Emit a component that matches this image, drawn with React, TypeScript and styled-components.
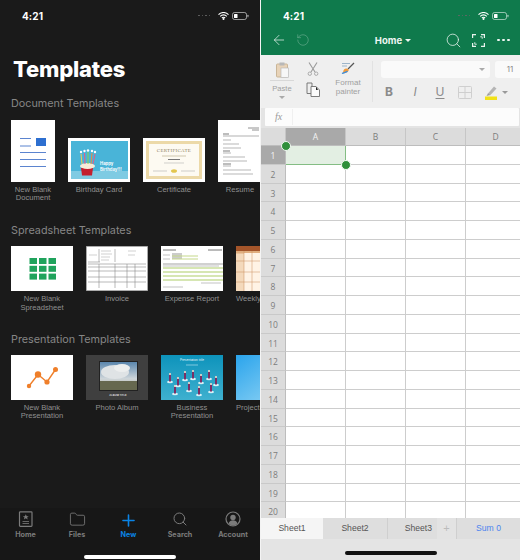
import React from "react";
import styled, { createGlobalStyle } from "styled-components";
import { ArrowLeft, RotateCcw, Search, Folder, Plus } from "lucide-react";

const Global = createGlobalStyle`
  html, body { margin: 0; padding: 0; background: #fff; }
  body { font-family: "Liberation Sans", Arial, sans-serif; }
  * { box-sizing: border-box; }
`;

const Page = styled.div`
  width: 520px; height: 560px; display: flex; gap: 1px; overflow: hidden; background: #f4f4f4;
`;
const Dark = styled.div`
  width: 260px; height: 560px; background: #1a1a1a; display: flex; flex-direction: column; overflow: hidden;
`;
const Status = styled.div`
  height: 31px; flex: none; padding: 0 11px 0 22px; display: flex; justify-content: space-between; align-items: center;
  color: #fff; font: 700 10px "Inter", sans-serif; letter-spacing: .1px;
`;
const Title = styled.h1`
  margin: 22px 0 0 13px; color: #fff; font: 800 22px/32px "Inter", sans-serif; letter-spacing: -.2px;
`;
const SectionTitle = styled.h2<{ $top: number }>`
  margin: ${p => p.$top}px 0 0 11px; color: #868686; font: 400 10.8px/14px "Inter", sans-serif;
`;
const Row = styled.div<{ $top: number }>`
  display: flex; gap: 13px; padding-left: 11px; margin-top: ${p => p.$top}px; width: 320px; align-items: flex-start;
`;
const Tile = styled.div<{ $w: number }>`
  width: ${p => p.$w}px; flex: none; display: flex; flex-direction: column; align-items: center;
`;
const Thumb = styled.div<{ $h: number }>`
  height: ${p => p.$h}px; width: 100%; display: flex; align-items: flex-end;
  svg { display: block; }
`;
const Caption = styled.div`
  margin-top: 4px; width: 78px; text-align: center; color: #909090; font: 400 7.6px/8.2px "Liberation Sans", sans-serif;
`;
const CutCaption = styled(Caption)`
  width: 100%; text-align: left;
`;
const TabBar = styled.nav`
  margin-top: auto; height: 52px; flex: none; background: #171717; display: grid;
  grid-template-columns: 51px 52px 51px 52px 54px; padding-top: 3px;
`;
const Tab = styled.div<{ $on?: boolean }>`
  display: flex; flex-direction: column; align-items: center; height: 28px; justify-content: space-between;
  color: ${p => (p.$on ? "#0a84e6" : "#7b7b7b")}; font: 700 7.2px/9px "Inter", sans-serif;
  svg { display: block; }
`;
const HomeBar = styled.div<{ $dark?: boolean }>`
  width: 92px; height: 3.5px; border-radius: 2px; margin: 0 auto; background: ${p => (p.$dark ? "#111" : "#fff")};
`;
const HomeWrap = styled.div`
  padding-top: 15px; grid-column: 1 / -1;
`;
const Light = styled.div`
  flex: 1; height: 560px; background: #e4e4e4; display: flex; flex-direction: column; overflow: hidden;
`;
const GreenTop = styled.div`
  background: #0f7a4c; height: 55px; flex: none; display: flex; flex-direction: column;
`;
const NavRow = styled.div`
  flex: 1; display: grid; grid-template-columns: 60px 114px 27px 25px 1fr; align-items: center; padding: 0 0 6px 10px; color: #e9f3ee;
`;
const NavLeft = styled.div`
  display: flex; gap: 9px; align-items: center;
`;
const NavTitle = styled.div`
  color: #eef6f2; font: 700 9.5px "Inter", sans-serif; display: flex; align-items: center; justify-content: center; gap: 3px; padding-left: 10px;
`;
const Caret = styled.span<{ $c?: string }>`
  display: inline-block; width: 0; height: 0; border: 3px solid transparent; border-bottom-width: 0; border-top: 3.5px solid ${p => p.$c ?? "currentColor"};
`;
const PasteCaret = styled(Caret)`
  margin-top: 3px;
`;
const Dots = styled.div`
  display: flex; gap: 2.6px;
  i { width: 2.6px; height: 2.6px; border-radius: 50%; background: #eef6f2; }
`;
const Ribbon = styled.div`
  height: 53px; flex: none; background: #efefef; display: flex; overflow: hidden;
`;
const ToolGroup = styled.div`
  width: 112px; flex: none; display: grid; grid-template-columns: 36px 26px 44px; padding: 1px 0 0 3px;
  border-right: 1px solid #e2e2e2; margin: 6px 0;
`;
const ToolCol = styled.div`
  display: flex; flex-direction: column; align-items: center; color: #a0a0a0; font: 400 7.6px/9px "Liberation Sans", sans-serif; text-align: center;
`;
const CutCol = styled(ToolCol)`
  gap: 6px;
`;
const PainterLabel = styled.span`
  margin-top: 4px; font-size: 8px;
`;
const PasteLine = styled.div`
  width: 24px; height: 1px; background: #d8d8d8; margin: 2px 0 3px;
`;
const Fonts = styled.div`
  flex: 1; padding: 6px 0 0 8px; display: flex; flex-direction: column; gap: 6px; overflow: hidden;
`;
const FontRow = styled.div`
  display: flex; gap: 5px; width: 150px;
`;
const FontBox = styled.div<{ $w: number }>`
  width: ${p => p.$w}px; height: 17px; flex: none; background: #fafafa; border-radius: 3px; color: #8a8a8a; font: 400 8px/17px "Inter", sans-serif;
  display: flex; align-items: center; justify-content: flex-end; padding-right: 5px;
`;
const SizeBox = styled(FontBox)`
  justify-content: center; padding: 0;
`;
const Formats = styled.div`
  display: flex; align-items: center; color: #8b8b8b; margin-left: -3px;
`;
const Fmt = styled.div<{ $w: number; $s?: string }>`
  width: ${p => p.$w}px; flex: none; text-align: center; font: ${p => p.$s ?? "400 12px"}/16px "Inter", sans-serif;
  display: flex; justify-content: center; align-items: center;
`;
const Under = styled.u`
  text-underline-offset: 2px;
`;
const Formula = styled.div`
  height: 18px; flex: none; margin: 0 1px 0 4px; background: #fcfcfc; display: flex; align-items: center; border-radius: 1px;
  color: #9a9a9a; font: italic 400 10px "Liberation Serif", serif;
`;
const Fx = styled.span`
  width: 28px; text-align: center; border-right: 1px solid #f0f0f0; line-height: 16px;
`;
const GridWrap = styled.div`
  margin-top: 2px; height: 390px; flex: none; background: #fff; position: relative; overflow: hidden;
  display: grid; grid-template-columns: 25px 60px 60px 60px 60px; grid-template-rows: 18px repeat(20, 18.75px); align-content: start;
`;
const ColHead = styled.div<{ $on?: boolean }>`
  background: ${p => (p.$on ? "#a9a9a9" : "#dcdcdc")}; color: ${p => (p.$on ? "#f4f4f4" : "#7c7c7c")}; font: 400 8.5px/18px "Open Sans", sans-serif; text-align: center;
  border-right: 1px solid #c6c6c6; border-bottom: 1px solid #bdbdbd;
`;
const RowHead = styled.div<{ $on?: boolean }>`
  background: ${p => (p.$on ? "#a9a9a9" : "#dcdcdc")}; color: ${p => (p.$on ? "#f4f4f4" : "#7c7c7c")}; font: 400 8.5px/18.75px "Open Sans", sans-serif; text-align: center;
  border-bottom: 1px solid #c9c9c9; border-right: 1px solid #bdbdbd; padding-top: 1px;
`;
const Cell = styled.div<{ $on?: boolean }>`
  background: ${p => (p.$on ? "#e3efe3" : "#fff")}; border-right: 1px solid ${p => (p.$on ? "#84bd84" : "#cdcdcd")}; border-bottom: 1px solid ${p => (p.$on ? "#84bd84" : "#cdcdcd")};
`;
const Handle = styled.span<{ $x: number; $y: number }>`
  position: absolute; left: ${p => p.$x}px; top: ${p => p.$y}px; width: 10px; height: 10px; border-radius: 50%; background: #2f8f3a; border: 1px solid #f2f7f2;
`;
const SheetBar = styled.div`
  height: 21px; flex: none; display: grid; grid-template-columns: 62px 65px 49px 20px 1fr; background: #dedede; font: 400 8.6px/21px "Liberation Sans", sans-serif; color: #555; text-align: center;
`;
const Sheet = styled.div<{ $on?: boolean; $edge?: boolean }>`
  background: ${p => (p.$on ? "#f5f5f5" : "transparent")}; border-right: ${p => (p.$edge ? "1px solid #cfcfcf" : "none")};
`;
const SheetName = styled(Sheet)`
  text-align: right; padding-right: 5px;
`;
const AddSheet = styled(Sheet)`
  background: #e3e3e3; color: #bbb; font-size: 11px;
`;
const Sum = styled(Sheet)`
  color: #4d84ee;
`;
const Bottom = styled.div`
  flex: 1; padding-top: 12px; background: #e4e4e4;
`;
const StatusIcons = styled.div`
  display: flex; align-items: center; gap: 3px;
  i { width: 1.7px; height: 1.7px; border-radius: 50%; background: #666; margin-right: -1.2px; }
`;
const StatusGap = styled.span`
  width: 3px;
`;

const Wifi = () => (
  <svg width="11" height="8" viewBox="0 0 11 8"><path d="M.5 2.6A7 7 0 0 1 10.5 2.6M2.2 4.3a4.6 4.6 0 0 1 6.6 0M3.9 6a2.2 2.2 0 0 1 3.2 0" stroke="currentColor" strokeWidth="1.1" fill="none"/><circle cx="5.5" cy="7" r="1" fill="currentColor"/></svg>
);
const Battery = () => (
  <svg width="17" height="8" viewBox="0 0 17 8"><rect x=".5" y=".5" width="14" height="7" rx="2" fill="none" stroke="currentColor" strokeOpacity=".55"/><rect x="2" y="2" width="3.5" height="4" rx=".6" fill="currentColor"/><rect x="15.4" y="2.7" width="1.1" height="2.6" rx=".5" fill="currentColor" opacity=".6"/></svg>
);
const StatusRight = () => (
  <StatusIcons><i /><i /><i /><i /><StatusGap /><Wifi /><Battery /></StatusIcons>
);

const BlankDoc = () => (
  <svg width="44" height="62" viewBox="0 0 44 62"><rect width="44" height="62" fill="#fff"/><g stroke="#5b84cf" strokeWidth="1"><path d="M9 18.500h11M9 26h11M9 32.500h26M9 39.500h26M9 46.500h26"/></g><rect x="25" y="18" width="10" height="8" fill="#2d6fd0"/></svg>
);
const Birthday = () => (
  <svg width="62" height="44" viewBox="0 0 62 44"><rect width="62" height="44" fill="#fff"/><rect x="3" y="3" width="57" height="38" fill="#49b4d8"/><rect x="3" y="33" width="57" height="8" fill="#7fcbe3"/><path d="M13 30h12l-1 7.500h-10z" fill="#c3202f"/><ellipse cx="19.500" cy="28" rx="7.500" ry="3" fill="#f6ecd8"/><g strokeWidth="1"><path d="M14 26l-1-10" stroke="#f2d04c"/><path d="M17 26l-.5-11" stroke="#e85b8a"/><path d="M20 26v-12" stroke="#8bd04c"/><path d="M23 26l1-11" stroke="#f08a3c"/><path d="M25 26l2-10" stroke="#e85b8a"/></g><circle cx="13" cy="14" r="1.200" fill="#fff"/><circle cx="16.500" cy="13" r="1.200" fill="#fff"/><circle cx="20" cy="12.500" r="1.200" fill="#fff"/><circle cx="24" cy="13" r="1.200" fill="#fff"/><circle cx="27" cy="14" r="1.200" fill="#fff"/><text x="32" y="27" fontSize="4.200" fontWeight="700" fill="#fff" fontFamily="Inter">Happy</text><text x="32" y="33" fontSize="4.200" fontWeight="700" fill="#fff" fontFamily="Inter">Birthday!!!</text></svg>
);
const Certificate = () => (
  <svg width="62" height="44" viewBox="0 0 62 44"><rect width="62" height="44" fill="#fff"/><rect x="3" y="3" width="56" height="38" fill="#ecd9a8"/><rect x="6" y="6" width="50" height="32" fill="#fdfaf2"/><text x="31" y="14" textAnchor="middle" fontSize="5" fontFamily="Liberation Serif" fill="#8d7f5c" letterSpacing=".3">CERTIFICATE</text><path d="M19 18h24" stroke="#cfc7ae"/><path d="M25 21.500h12" stroke="#777"/><path d="M21 25h20" stroke="#bbb" strokeWidth=".7"/><path d="M10 33h14M38 33h14" stroke="#b8b8b8" strokeWidth=".7"/><ellipse cx="31" cy="33" rx="3" ry="1.800" fill="#e3c64f"/></svg>
);
const Resume = () => (
  <svg width="44" height="62" viewBox="0 0 44 62"><rect width="44" height="62" fill="#fff"/><path d="M30 8h11M34 10h7" stroke="#777" strokeWidth=".8"/><rect x="5" y="15" width="36" height="2" fill="#d8d8d8"/>{[20,24,28,33,37,41,46,50,54].map((y,i)=><path key={y} d={`M5 ${y}h${i%3===0?8:14+i*2}`} stroke="#999" strokeWidth=".7"/>)}<path d="M5 14h6" stroke="#444" strokeWidth=".7"/><path d="M5 44h8M5 31h7" stroke="#444" strokeWidth=".7"/></svg>
);
const BlankSheet = () => (
  <svg width="62" height="45" viewBox="0 0 62 45"><rect width="62" height="45" fill="#fff"/>{[0,1,2].map(r=>[0,1,2].map(c=><rect key={`${r}${c}`} x={18.500+c*9.500} y={12+r*7.800} width="7.500" height="6" fill="#1fa35c"/>))}</svg>
);
const Invoice = () => (
  <svg width="62" height="45" viewBox="0 0 62 45"><rect width="62" height="45" fill="#fff" stroke="#8f8f8f" strokeWidth="1.500"/><g stroke="#8a8a8a" strokeWidth=".6" fill="none"><path d="M2 18h58M2 21h58M2 25h58M2 31h58M2 36h58"/><path d="M13 3v13M13 18v24M29 18v24M41 18v24M49 18v24M29 3v13M2 16h12"/></g><g stroke="#bdbdbd" strokeWidth=".7"><path d="M15 5h10M15 8h11M15 11h9M15 14h8M42 5h8M42 9h7M3 9h8"/></g></svg>
);
const Expense = () => (
  <svg width="62" height="45" viewBox="0 0 62 45"><rect width="62" height="45" fill="#fff"/><path d="M2 4h13M47 4h14" stroke="#666" strokeWidth=".9"/><rect x="11" y="7" width="10" height="6" fill="#ccc"/><path d="M11 10h26M11 13h26" stroke="#c5d88a"/><path d="M2 18h60" stroke="#666" strokeWidth=".6"/><g stroke="#c9de9a" strokeWidth="1.300"><path d="M2 22h60M2 26h60M2 30h60M2 34h60"/></g><path d="M2 9h7M2 13h7M2 20h56M40 37h20M2 41h20" stroke="#aaa" strokeWidth=".7"/></svg>
);
const Weekly = () => (
  <svg width="62" height="45" viewBox="0 0 62 45"><rect width="62" height="45" fill="#f4d9bb"/><rect width="62" height="5" fill="#a4552a"/><rect y="5" width="62" height="2.500" fill="#e0ae7f"/><rect x="8" y="7" width="54" height="38" fill="#fff3e5"/><g stroke="#c88d5c" strokeWidth=".5"><path d="M0 15h62M0 26h62M0 36h62M8 5v40M16 5v40"/></g></svg>
);
const BlankPres = () => (
  <svg width="62" height="45" viewBox="0 0 62 45"><rect width="62" height="45" fill="#fff"/><path d="M18 31L27 19.500L36 27L44.500 14.500" stroke="#ef7f2a" strokeWidth="1.400" fill="none"/><circle cx="18" cy="31" r="2.200" fill="#ef7f2a"/><circle cx="27" cy="19.500" r="3.200" fill="#ef7f2a"/><circle cx="36" cy="27" r="2.600" fill="#ef7f2a"/><circle cx="44.500" cy="14.500" r="2.500" fill="#ef7f2a"/></svg>
);
const Album = () => (
  <svg width="62" height="45" viewBox="0 0 62 45"><defs><linearGradient id="sky" x1="0" y1="0" x2="0" y2="1"><stop offset="0" stopColor="#5a86ad"/><stop offset=".6" stopColor="#cfd6da"/><stop offset="1" stopColor="#a7a78e"/></linearGradient></defs><rect width="62" height="45" fill="#3f3f3f"/><rect x="13" y="6" width="39" height="30" fill="#222"/><rect x="14" y="7" width="37" height="28" fill="url(#sky)"/><ellipse cx="29" cy="17" rx="14" ry="7" fill="#dfe3e5"/><ellipse cx="36" cy="13" rx="8" ry="4" fill="#eceeee"/><rect x="14" y="26" width="37" height="9" fill="#66684f"/><text x="32" y="40.500" textAnchor="middle" fontSize="2.600" fontWeight="700" fill="#ddd" fontFamily="Inter">ALBUM TITLE</text></svg>
);
const Business = () => (
  <svg width="62" height="45" viewBox="0 0 62 45"><defs><linearGradient id="bz" x1="0" y1="0" x2="0" y2="1"><stop offset="0" stopColor="#0d93bb"/><stop offset="1" stopColor="#3fb0cf"/></linearGradient></defs><rect width="62" height="45" fill="url(#bz)"/><text x="31" y="6" textAnchor="middle" fontSize="3" fill="#eaf7fb" fontFamily="Inter">Presentation title</text><path d="M25 10h12" stroke="#a9dded" strokeWidth=".7"/>{[[9,22],[17,26],[24,20],[32,19],[40,23],[48,19],[55,25],[14,34],[28,31],[38,35],[50,32]].map(([x,y])=><g key={`${x}-${y}`}><ellipse cx={x} cy={y+5} rx="3" ry="1.200" fill="#d6f0f6"/><rect x={x-1} y={y-2} width="2" height="6.500" fill="#7a2f66"/><circle cx={x} cy={y-3} r="1.100" fill="#f0d8c8"/></g>)}</svg>
);
const Project = () => (
  <svg width="62" height="45" viewBox="0 0 62 45"><defs><linearGradient id="pj" x1="0" y1="0" x2="1" y2="1"><stop offset="0" stopColor="#2aa4ec"/><stop offset="1" stopColor="#9ad8f5"/></linearGradient></defs><rect width="62" height="45" fill="url(#pj)"/></svg>
);

const tmpl = (w: number, h: number, node: React.ReactNode, cap: React.ReactNode) => (
  <Tile $w={w} key={String(h) + String(node && (node as any).type?.name) + w}><Thumb $h={h}>{node}</Thumb><Caption>{cap}</Caption></Tile>
);
const cutTmpl = (node: React.ReactNode, cap: string) => (
  <Tile $w={62} key={cap}><Thumb $h={45}>{node}</Thumb><CutCaption>{cap}</CutCaption></Tile>
);

const Doc = () => (
  <svg width="16" height="17" viewBox="0 0 16 17" fill="none" stroke="currentColor"><rect x="1.500" y=".8" width="12.500" height="14.500" rx=".8" strokeWidth="1.200"/><path d="M7.800 3.200l.9 2 2 .1-1.600 1.200.6 2-1.900-1.200-1.900 1.200.6-2-1.600-1.200 2-.1z" fill="currentColor" stroke="none"/><path d="M4.500 10.500h6.500M4.500 12.500h6.500" strokeWidth=".8"/></svg>
);
const Account = () => (
  <svg width="16" height="16" viewBox="0 0 16 16"><circle cx="8" cy="8" r="7" fill="none" stroke="currentColor" strokeWidth="1.200"/><circle cx="8" cy="6.400" r="2.700" fill="currentColor"/><path d="M3.500 12.600c.8-2.400 2.500-3.300 4.500-3.300s3.700.9 4.500 3.300A6 6 0 0 1 3.500 12.600z" fill="currentColor"/></svg>
);
const Clip = () => (
  <svg width="13" height="16" viewBox="0 0 13 16"><rect x=".5" y="2" width="11" height="13" rx="1" fill="#e8d3b8" stroke="#c9b597"/><rect x="3.500" y=".5" width="5" height="3" fill="#b8b8b8"/><rect x="5" y="6" width="7.500" height="9.500" fill="#f7f7f7" stroke="#bbb" strokeWidth=".7"/></svg>
);
const Scissors = () => (
  <svg width="12" height="14" viewBox="0 0 12 14" fill="none" stroke="#9a9a9a"><path d="M2 .5L8 10M10 .5L4 10" strokeWidth="1.100"/><circle cx="2.800" cy="11.700" r="1.700" strokeWidth=".8"/><circle cx="9.200" cy="11.700" r="1.700" strokeWidth=".8"/></svg>
);
const Copy = () => (
  <svg width="15" height="15" viewBox="0 0 15 15" fill="none" stroke="#6e6e6e" strokeWidth=".9"><path d="M5 11.500H1V1h5v3"/><path d="M5 4.500h5l3.500 3.500v6.500H5z" fill="#fbfbfb"/><path d="M10 4.500L12 8l-2 0z" fill="#222" stroke="none"/></svg>
);
const Painter = () => (
  <svg width="14" height="12" viewBox="0 0 14 12"><path d="M1 1.500h8M1 4h5" stroke="#9db5c9"/><path d="M13 1L7 7" stroke="#555" strokeWidth="1.300"/><path d="M3 7.500c1.500-1.500 3.500-1 4.500 0S6 11.500 1 11.500c1.500-1 1-2.500 2-4z" fill="#f19a3a"/><path d="M1 11.500c2-1 4-1 5.500-2.200" stroke="#3b8fe0" strokeWidth="1.300" fill="none"/></svg>
);
const Borders = () => (
  <svg width="14" height="13" viewBox="0 0 14 13" fill="none" stroke="#cfcfcf"><rect x=".5" y=".5" width="13" height="12" rx="1"/><path d="M7 .5v12M.5 6.500h13"/></svg>
);
const Highlight = () => (
  <svg width="13" height="15" viewBox="0 0 13 15"><path d="M2.500 9L9 1.500l2.500 2L5 10.500z" fill="#b5b5b5"/><path d="M1.500 11L3 8.500l2 1.500z" fill="#999"/><rect x="0" y="11.500" width="12" height="3.500" fill="#f2e219"/></svg>
);
const Expand = () => (
  <svg width="13" height="13" viewBox="0 0 13 13" fill="none" stroke="currentColor" strokeWidth="1.200"><path d="M.6 4V.6H4M9 .6h3.400V4M.6 9v3.400H4M9 12.400h3.400V9"/><path d="M8.200 2.800h2v2M2.800 8.200v2h2" strokeWidth=".9"/></svg>
);

const rows = Array.from({ length: 20 }, (_, i) => i + 1);

export default function App() {
  return (
    <Page>
      <Global />
      <Dark>
        <Status>4:21<StatusRight /></Status>
        <Title>Templates</Title>
        <SectionTitle $top={12}>Document Templates</SectionTitle>
        <Row $top={9}>
          {tmpl(44, 62, <BlankDoc />, <>New Blank<br />Document</>)}
          {tmpl(62, 62, <Birthday />, "Birthday Card")}
          {tmpl(62, 62, <Certificate />, "Certificate")}
          {tmpl(44, 62, <Resume />, "Resume")}
        </Row>
        <SectionTitle $top={22}>Spreadsheet Templates</SectionTitle>
        <Row $top={8}>
          {tmpl(62, 45, <BlankSheet />, <>New Blank<br />Spreadsheet</>)}
          {tmpl(62, 45, <Invoice />, "Invoice")}
          {tmpl(62, 45, <Expense />, "Expense Report")}
          {cutTmpl(<Weekly />, "Weekly")}
        </Row>
        <SectionTitle $top={21}>Presentation Templates</SectionTitle>
        <Row $top={8}>
          {tmpl(62, 45, <BlankPres />, <>New Blank<br />Presentation</>)}
          {tmpl(62, 45, <Album />, "Photo Album")}
          {tmpl(62, 45, <Business />, <>Business<br />Presentation</>)}
          {cutTmpl(<Project />, "Project")}
        </Row>
        <TabBar>
          <Tab><Doc />Home</Tab>
          <Tab><Folder size={17} strokeWidth={1.2} />Files</Tab>
          <Tab $on><Plus size={19} strokeWidth={2} />New</Tab>
          <Tab><Search size={16} strokeWidth={1.5} />Search</Tab>
          <Tab><Account />Account</Tab>
          <HomeWrap><HomeBar /></HomeWrap>
        </TabBar>
      </Dark>
      <Light>
        <GreenTop>
          <Status>4:21<StatusRight /></Status>
          <NavRow>
            <NavLeft>
              <ArrowLeft size={16} strokeWidth={1.1} />
              <RotateCcw size={14} strokeWidth={1} opacity={.45} />
            </NavLeft>
            <NavTitle>Home<Caret /></NavTitle>
            <Search size={17} strokeWidth={1.1} />
            <Expand />
            <Dots><i /><i /><i /></Dots>
          </NavRow>
        </GreenTop>
        <Ribbon>
          <ToolGroup>
            <ToolCol><Clip /><PasteLine />Paste<PasteCaret $c="#aaa" /></ToolCol>
            <CutCol><Scissors /><Copy /></CutCol>
            <ToolCol><Painter /><PainterLabel>Format<br />painter</PainterLabel></ToolCol>
          </ToolGroup>
          <Fonts>
            <FontRow>
              <FontBox $w={109}><Caret $c="#aaa" /></FontBox>
              <SizeBox $w={30}>11</SizeBox>
            </FontRow>
            <Formats>
              <Fmt $w={22} $s="700 12px">B</Fmt>
              <Fmt $w={30} $s="italic 400 12px">I</Fmt>
              <Fmt $w={20}><Under>U</Under></Fmt>
              <Fmt $w={30}><Borders /></Fmt>
              <Fmt $w={22}><Highlight /></Fmt>
              <Fmt $w={6}><Caret $c="#999" /></Fmt>
            </Formats>
          </Fonts>
        </Ribbon>
        <Formula><Fx>fx</Fx></Formula>
        <GridWrap>
          <ColHead />
          {["A", "B", "C", "D"].map(c => <ColHead key={c} $on={c === "A"}>{c}</ColHead>)}
          {rows.map(r => (
            <React.Fragment key={r}>
              <RowHead $on={r === 1}>{r}</RowHead>
              {[0, 1, 2, 3].map(c => <Cell key={c} $on={r === 1 && c === 0} />)}
            </React.Fragment>
          ))}
          <Handle $x={20} $y={13} />
          <Handle $x={80} $y={32} />
        </GridWrap>
        <SheetBar>
          <Sheet $on>Sheet1</Sheet>
          <Sheet $edge>Sheet2</Sheet>
          <SheetName>Sheet3</SheetName>
          <AddSheet $edge>+</AddSheet>
          <Sum>Sum 0</Sum>
        </SheetBar>
        <Bottom><HomeBar $dark /></Bottom>
      </Light>
    </Page>
  );
}
